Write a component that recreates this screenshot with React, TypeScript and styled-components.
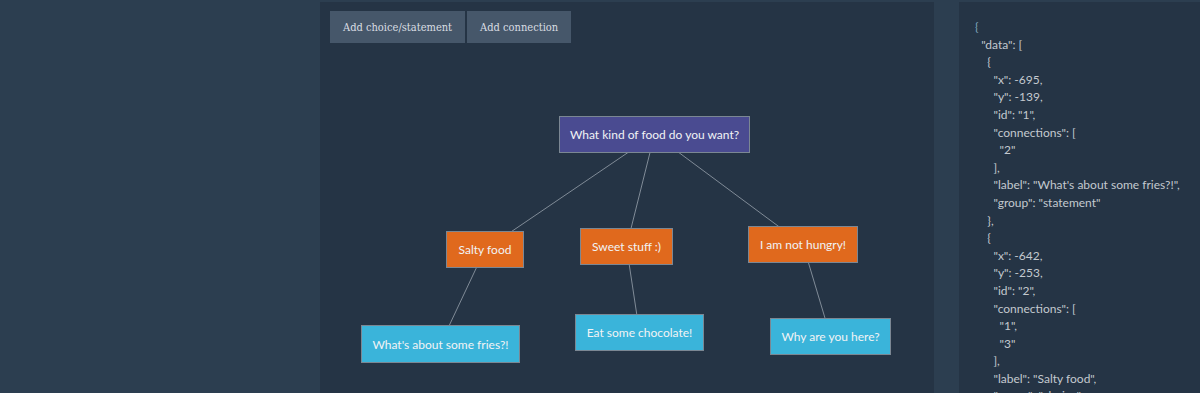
import React from "react";
import styled, { createGlobalStyle } from "styled-components";

const GlobalStyle = createGlobalStyle`
  html, body {
    margin: 0;
    padding: 0;
    background: #2c3e50;
  }
  * {
    box-sizing: border-box;
  }
`;

const Page = styled.div`
  display: flex;
  height: 393px;
  padding-top: 2px;
  overflow: hidden;
`;

const Spacer = styled.div`
  width: 320px;
  flex-shrink: 0;
`;

const Canvas = styled.section`
  position: relative;
  width: 614px;
  flex-shrink: 0;
  background: #253445;
  overflow: hidden;
`;

const Toolbar = styled.div`
  position: relative;
  z-index: 2;
  display: flex;
  gap: 2px;
  padding: 9px 10px;
`;

const ToolButton = styled.button`
  height: 32px;
  padding: 0 13px;
  border: 0;
  background: #46576a;
  color: #d9dee3;
  font-family: "DejaVu Serif Condensed", "DejaVu Serif", serif;
  font-stretch: condensed;
  font-size: 11px;
  cursor: pointer;
`;

const Edges = styled.svg`
  position: absolute;
  left: 0;
  top: 0;
  width: 100%;
  height: 100%;
  z-index: 0;
`;

const Node = styled.div<{ $kind: "question" | "choice" | "statement" }>`
  position: absolute;
  z-index: 1;
  display: flex;
  align-items: center;
  justify-content: center;
  border: 1px solid #7b8793;
  color: #f1f3f5;
  font-family: Lato, "Noto Sans", sans-serif;
  font-size: 12px;
  white-space: nowrap;
  background: ${(p) =>
    p.$kind === "question"
      ? "#4a4b91"
      : p.$kind === "choice"
      ? "#e0691d"
      : "#3ab4da"};
`;

const JsonPanel = styled.aside`
  margin-left: 25px;
  flex: 1;
  background: #253445;
  padding: 16px 0 0 16px;
  overflow: hidden;
`;

const JsonText = styled.pre`
  margin: 0;
  font-family: Lato, "Noto Sans", sans-serif;
  font-size: 12px;
  line-height: 17.6px;
  color: #c3c9cf;
  white-space: pre;
`;

const Brace = styled.span`
  color: #7fa6bc;
`;

type Kind = "question" | "choice" | "statement";

interface DiagramNode {
  id: string;
  label: string;
  kind: Kind;
  x: number;
  y: number;
  w: number;
  h: number;
}

const nodes: DiagramNode[] = [
  { id: "0", label: "What kind of food do you want?", kind: "question", x: 239, y: 114, w: 191, h: 37 },
  { id: "1", label: "Salty food", kind: "choice", x: 126, y: 229, w: 78, h: 37 },
  { id: "2", label: "Sweet stuff :)", kind: "choice", x: 260, y: 226, w: 93, h: 37 },
  { id: "3", label: "I am not hungry!", kind: "choice", x: 428, y: 224, w: 110, h: 37 },
  { id: "4", label: "What's about some fries?!", kind: "statement", x: 41, y: 323, w: 159, h: 38 },
  { id: "5", label: "Eat some chocolate!", kind: "statement", x: 255, y: 312, w: 129, h: 37 },
  { id: "6", label: "Why are you here?", kind: "statement", x: 450, y: 316, w: 121, h: 37 },
];

const edges: [string, string][] = [
  ["0", "1"],
  ["0", "2"],
  ["0", "3"],
  ["1", "4"],
  ["2", "5"],
  ["3", "6"],
];

const center = (id: string) => {
  const n = nodes.find((node) => node.id === id)!;
  return { cx: n.x + n.w / 2, cy: n.y + n.h / 2 };
};

const data = {
  data: [
    {
      x: -695,
      y: -139,
      id: "1",
      connections: ["2"],
      label: "What's about some fries?!",
      group: "statement",
    },
    {
      x: -642,
      y: -253,
      id: "2",
      connections: ["1", "3"],
      label: "Salty food",
      group: "choice",
    },
    {
      x: -499,
      y: -371,
      id: "3",
      connections: ["2", "4", "6"],
      label: "What kind of food do you want?",
      group: "question",
    },
  ],
};

const json = JSON.stringify(data, null, 2);

export default function App() {
  return (
    <>
      <GlobalStyle />
      <Page>
        <Spacer />
        <Canvas>
          <Toolbar>
            <ToolButton type="button">Add choice/statement</ToolButton>
            <ToolButton type="button">Add connection</ToolButton>
          </Toolbar>
          <Edges>
            {edges.map(([from, to]) => {
              const a = center(from);
              const b = center(to);
              return (
                <line
                  key={from + "-" + to}
                  x1={a.cx}
                  y1={a.cy}
                  x2={b.cx}
                  y2={b.cy}
                  stroke="#808b97"
                  strokeWidth={1}
                />
              );
            })}
          </Edges>
          {nodes.map((n) => (
            <Node
              key={n.id}
              $kind={n.kind}
              style={{ left: n.x, top: n.y, width: n.w, height: n.h }}
            >
              {n.label}
            </Node>
          ))}
        </Canvas>
        <JsonPanel>
          <JsonText>
            <Brace>{json.slice(0, 1)}</Brace>
            {json.slice(1)}
          </JsonText>
        </JsonPanel>
      </Page>
    </>
  );
}
